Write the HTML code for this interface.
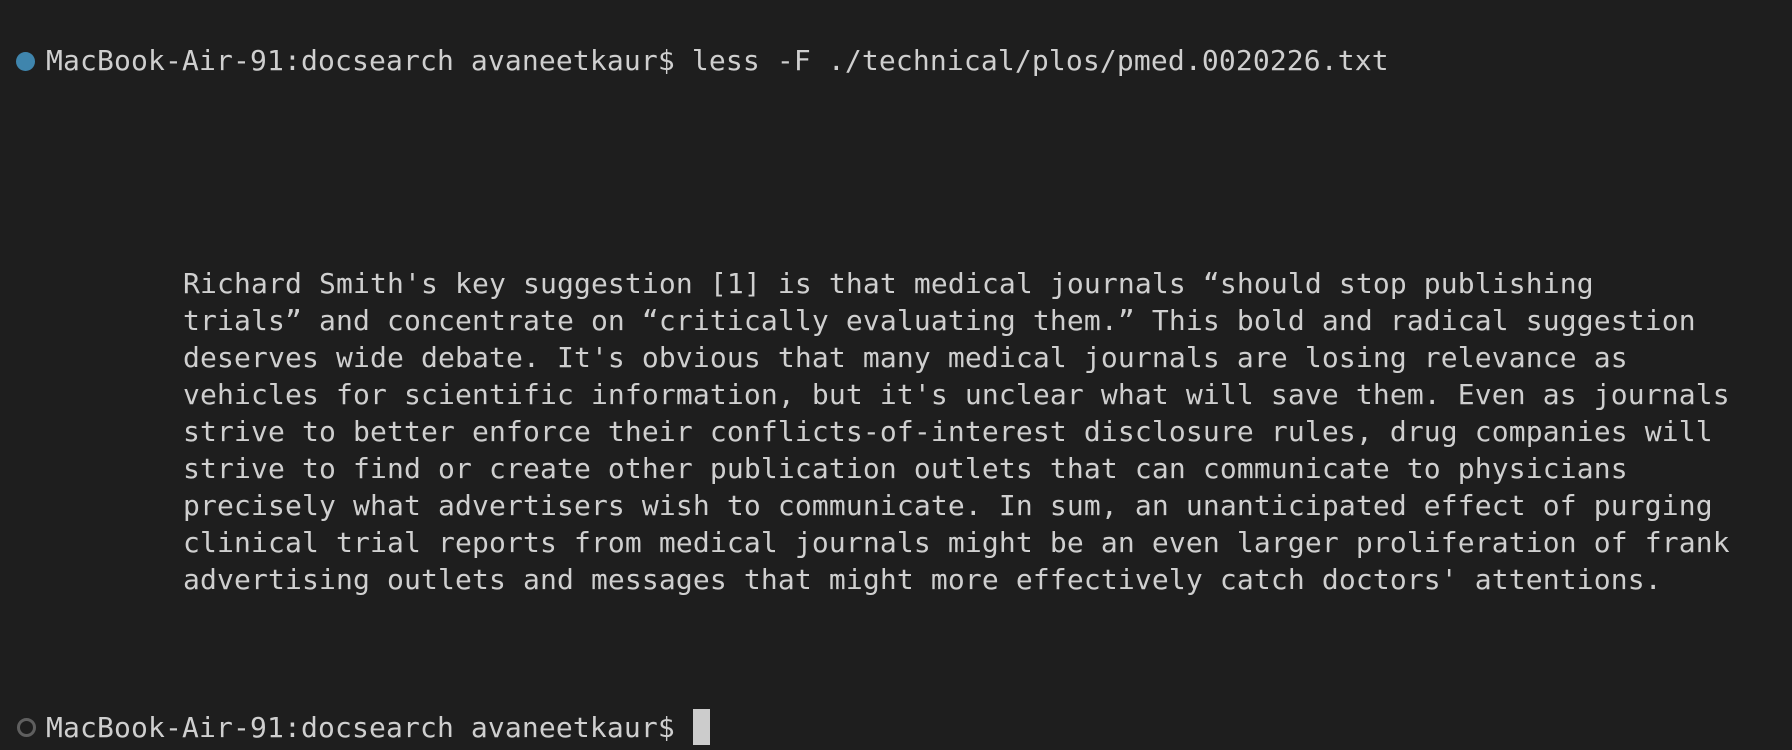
<!DOCTYPE html>
<html><head><meta charset="utf-8"><style>
html,body{margin:0;padding:0;background:#1e1e1e;width:1792px;height:750px;overflow:hidden}
.l{position:absolute;left:46px;font-family:"DejaVu Sans Mono","Liberation Mono",monospace;font-size:28px;line-height:37px;color:#cfcfcf;white-space:pre;letter-spacing:0.14px}
.p{left:183px}
</style></head><body>
<div style="position:absolute;left:16px;top:52px;width:19px;height:19px;border-radius:50%;background:#3f85ad"></div>
<div class="l" style="top:42px">MacBook-Air-91:docsearch avaneetkaur$ less -F ./technical/plos/pmed.0020226.txt</div>
<div class="l p" style="top:265px">Richard Smith's key suggestion [1] is that medical journals “should stop publishing
trials” and concentrate on “critically evaluating them.” This bold and radical suggestion
deserves wide debate. It's obvious that many medical journals are losing relevance as
vehicles for scientific information, but it's unclear what will save them. Even as journals
strive to better enforce their conflicts-of-interest disclosure rules, drug companies will
strive to find or create other publication outlets that can communicate to physicians
precisely what advertisers wish to communicate. In sum, an unanticipated effect of purging
clinical trial reports from medical journals might be an even larger proliferation of frank
advertising outlets and messages that might more effectively catch doctors' attentions.</div>
<div style="position:absolute;left:17px;top:718px;width:13px;height:13px;border-radius:50%;border:3px solid #5f5f5f"></div>
<div class="l" style="top:709px">MacBook-Air-91:docsearch avaneetkaur$ </div>
<div style="position:absolute;left:693px;top:709px;width:17px;height:36px;background:#cccccc"></div>
</body></html>
